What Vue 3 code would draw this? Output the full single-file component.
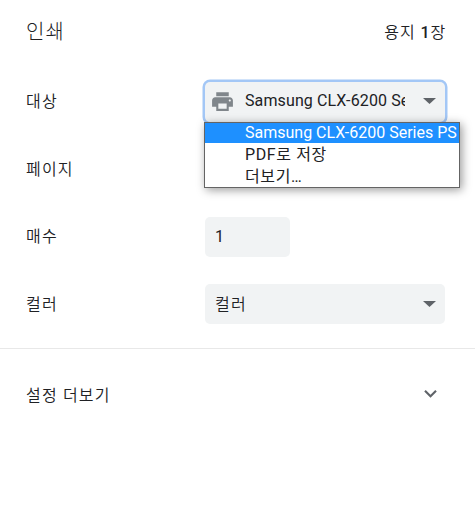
<script setup>
import { ref } from 'vue'

const destinations = ['Samsung CLX-6200 Series PS', 'PDF로 저장', '더보기…']
const selected = ref(0)
const copies = ref('1')
</script>

<template>
  <div class="print">
    <header class="header">
      <h1>인쇄</h1>
      <span class="sheets">용지 <b>1</b>장</span>
    </header>

    <div class="row">
      <span class="label">대상</span>
      <div class="select focused">
        <svg class="printer" viewBox="0 0 24 24">
          <path d="M19 8H5c-1.66 0-3 1.34-3 3v6h4v4h12v-4h4v-6c0-1.66-1.34-3-3-3zm-3 11H8v-5h8v5zm3-7c-.55 0-1-.45-1-1s.45-1 1-1 1 .45 1 1-.45 1-1 1zm-1-9H6v4h12V3z" />
        </svg>
        <span class="value">{{ destinations[selected] }}</span>
        <svg class="arrow" viewBox="0 0 13 6"><path d="M0 0h13L6.5 6z" /></svg>
        <ul class="menu">
          <li
            v-for="(name, index) in destinations"
            :key="name"
            :class="{ active: index === selected }"
            @click="selected = index"
          >{{ name }}</li>
        </ul>
      </div>
    </div>

    <div class="row">
      <span class="label">페이지</span>
    </div>

    <div class="row">
      <span class="label">매수</span>
      <input v-model="copies" class="copies" type="text">
    </div>

    <div class="row">
      <span class="label">컬러</span>
      <div class="select color">
        <span class="value">컬러</span>
        <svg class="arrow" viewBox="0 0 13 6"><path d="M0 0h13L6.5 6z" /></svg>
      </div>
    </div>

    <div class="more">
      <span>설정 더보기</span>
      <svg class="chevron" viewBox="0 0 24 24">
        <path d="M16.59 8.59L12 13.17 7.41 8.59 6 10l6 6 6-6z" />
      </svg>
    </div>
  </div>
</template>

<style>
body {
  background: #fff;
}
</style>

<style scoped>
.print {
  height: 527px;
  overflow: hidden;
  font-family: Roboto, "Noto Sans CJK KR", sans-serif;
  font-size: 16px;
  color: #202124;
}

.header {
  display: flex;
  justify-content: space-between;
  align-items: center;
  height: 62px;
  padding: 0 29px 0 26px;
  box-sizing: border-box;
  margin-bottom: 6px;
}

.header h1 {
  margin: 0;
  font-family: "Noto Sans CJK KR", sans-serif;
  font-size: 20px;
  font-weight: 300;
  line-height: 28px;
  letter-spacing: 1.2px;
}

.sheets {
  font-weight: 350;
  letter-spacing: 0.9px;
}

.sheets b {
  font-weight: 500;
}

.row {
  display: flex;
  align-items: center;
  height: 67.5px;
  padding: 0 30px 0 25px;
}

.label {
  box-sizing: border-box;
  width: 180px;
  padding: 0 0 3px 1px;
  font-family: "Noto Sans CJK KR", sans-serif;
  font-weight: 350;
  line-height: 24px;
  letter-spacing: 1.2px;
}

.select {
  display: flex;
  align-items: center;
  position: relative;
  box-sizing: border-box;
  width: 240px;
  height: 40px;
  padding: 0 9px 0 10px;
  border-radius: 5px;
  background: #f1f3f4;
}

.focused {
  padding-left: 5px;
  box-shadow: 0 0 0 2.5px rgba(26, 115, 232, 0.4);
}

.value {
  flex: 1;
  overflow: hidden;
  white-space: nowrap;
}

.focused .value {
  margin-right: 18px;
  padding-bottom: 2px;
  letter-spacing: 0.12px;
}

.color .value {
  padding-bottom: 2px;
  font-weight: 350;
  letter-spacing: 1.2px;
}

.printer {
  flex: none;
  width: 25px;
  height: 25px;
  margin-right: 10px;
  fill: #80868b;
}

.arrow {
  flex: none;
  width: 13px;
  height: 6px;
  fill: #5f6368;
}

.focused .arrow {
  margin-bottom: 2px;
}

.menu {
  position: absolute;
  top: 40px;
  left: -1px;
  z-index: 1;
  box-sizing: border-box;
  width: 256px;
  height: 66px;
  margin: 0;
  padding: 0;
  border: 1px solid #646464;
  background: #fff;
  box-shadow: 2px 2px 9px rgba(0, 0, 0, 0.4);
  list-style: none;
}

.menu li {
  height: 22px;
  padding-left: 40px;
  font-weight: 370;
  line-height: 24px;
  letter-spacing: 0.6px;
  white-space: nowrap;
}

.menu .active {
  height: 20px;
  background: #1e90ff;
  color: #fff;
  font-weight: 400;
  line-height: 20px;
  letter-spacing: 0;
}

.copies {
  box-sizing: border-box;
  width: 85px;
  height: 40px;
  padding: 0 10px;
  border: none;
  border-radius: 5px;
  outline: none;
  background: #f1f3f4;
  color: #202124;
  font: inherit;
}

.more {
  display: flex;
  justify-content: space-between;
  align-items: center;
  height: 92px;
  margin-top: 10px;
  padding: 0 32px 0 26px;
  border-top: 1px solid #e8e8e8;
  font-weight: 350;
  letter-spacing: 1.2px;
}

.more span {
  padding-bottom: 2px;
}

.chevron {
  width: 25px;
  height: 25px;
  margin-bottom: 4px;
  fill: #5f6368;
}
</style>
